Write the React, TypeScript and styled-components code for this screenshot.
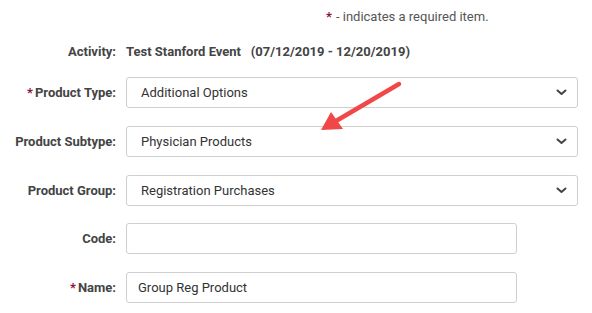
import React from "react";
import styled, { createGlobalStyle } from "styled-components";

const Global = createGlobalStyle`
  html, body { margin: 0; padding: 0; background: #fff; }
  body { font-family: Roboto, "Liberation Sans", Arial, sans-serif; }
`;

const Page = styled.div`
  position: relative;
  width: 592px;
  height: 313px;
  overflow: hidden;
  background: #fff;
`;

const Form = styled.div`
  display: grid;
  grid-template-columns: 116px 1fr;
  column-gap: 10px;
  align-items: center;
  padding-top: 8px;
`;

const Note = styled.div`
  grid-column: 2;
  padding-left: 200px;
  font-size: 13px;
  line-height: 18px;
  color: #555;
  height: 18px;
`;

const Star = styled.span<{ $gap: number }>`
  color: #8b1538;
  font-weight: 700;
  margin-right: ${(p) => p.$gap}px;
`;

const Label = styled.div<{ $top: number }>`
  grid-column: 1;
  margin-top: ${(p) => p.$top}px;
  text-align: right;
  font-size: 13px;
  font-weight: 700;
  color: #444;
  white-space: nowrap;
`;

const Value = styled.div<{ $top: number }>`
  grid-column: 2;
  margin-top: ${(p) => p.$top}px;
  font-size: 13px;
  font-weight: 700;
  color: #444;
  white-space: pre;
`;

const Field = styled.div<{ $top: number; $width: number; $pad: number }>`
  grid-column: 2;
  margin-top: ${(p) => p.$top}px;
  box-sizing: border-box;
  width: ${(p) => p.$width}px;
  height: 31px;
  border: 1px solid #cfcfcf;
  border-radius: 3px;
  background: #fff;
  display: flex;
  align-items: center;
  justify-content: space-between;
  padding: 0 10px 0 ${(p) => p.$pad}px;
  font-size: 13px;
  color: #333;
`;

const Chevron = () => (
  <svg width="11" height="7" viewBox="0 0 11 7">
    <path d="M1.5 1.5 L5.5 5 L9.5 1.5" fill="none" stroke="#444" strokeWidth="2" strokeLinecap="round" strokeLinejoin="round" />
  </svg>
);

const ArrowLayer = styled.svg`
  position: absolute;
  left: 0;
  top: 0;
  pointer-events: none;
`;

type Row = { label: string; required?: boolean; value: string; select: boolean; gap: number };

const rows: Row[] = [
  { label: "Product Type:", required: true, value: "Additional Options", select: true, gap: 18 },
  { label: "Product Subtype:", value: "Physician Products", select: true, gap: 18 },
  { label: "Product Group:", value: "Registration Purchases", select: true, gap: 18 },
  { label: "Code:", value: "", select: false, gap: 17 },
  { label: "Name:", required: true, value: "Group Reg Product", select: false, gap: 18 },
];

export default function App() {
  return (
    <Page>
      <Global />
      <Form>
        <Note>
          <Star $gap={4}>*</Star>- indicates a required item.
        </Note>
        <Label $top={18}>Activity:</Label>
        <Value $top={18}>{"Test Stanford Event   (07/12/2019 - 12/20/2019)"}</Value>
        {rows.map((r) => (
          <React.Fragment key={r.label}>
            <Label $top={r.gap}>
              {r.required && <Star $gap={2}>*</Star>}
              {r.label}
            </Label>
            <Field $top={r.gap} $width={r.select ? 452 : 391} $pad={r.select ? 14 : 11}>
              <span>{r.value}</span>
              {r.select && <Chevron />}
            </Field>
          </React.Fragment>
        ))}
      </Form>
      <ArrowLayer width="592" height="313" viewBox="0 0 592 313">
        <line x1="399" y1="84" x2="336" y2="121" stroke="#f04848" strokeWidth="4.5" strokeLinecap="round" />
        <polygon points="321,130 331,112 343,129" fill="#f04848" />
      </ArrowLayer>
    </Page>
  );
}
